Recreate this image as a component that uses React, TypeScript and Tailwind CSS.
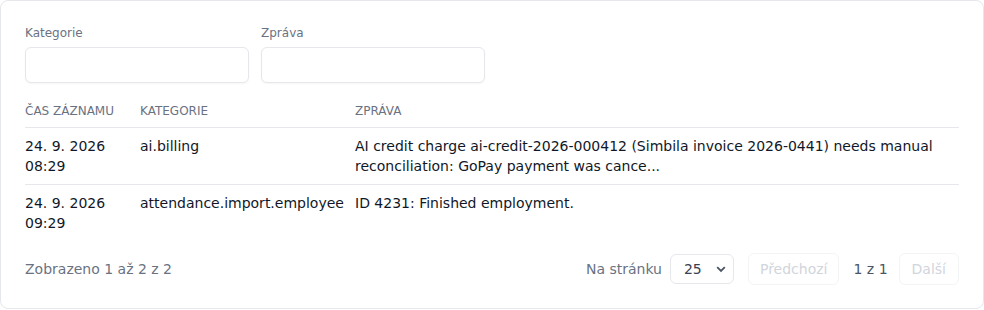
import React from "react";

const rows = [
  {
    time: ["24. 9. 2026", "08:29"],
    category: "ai.billing",
    message:
      "AI credit charge ai-credit-2026-000412 (Simbila invoice 2026-0441) needs manual reconciliation: GoPay payment was cance...",
  },
  {
    time: ["24. 9. 2026", "09:29"],
    category: "attendance.import.employee",
    message: "ID 4231: Finished employment.",
  },
];

const Filter = ({ label }: { label: string }) => (
  <div className="flex w-[224px] flex-col">
    <label className="mb-1.5 text-xs leading-4 text-gray-500">{label}</label>
    <input
      type="text"
      className="h-9 w-full rounded-md border border-gray-200 bg-white px-3 text-sm text-gray-900 shadow-[0_1px_2px_rgba(0,0,0,0.04)] outline-none"
    />
  </div>
);

export default function App() {
  return (
    <div className="bg-white p-0 font-['DejaVu_Sans',sans-serif]">
      <div className="h-[309px] rounded-lg border border-gray-200 bg-white px-6 pt-6">
        <div className="flex gap-3">
          <Filter label="Kategorie" />
          <Filter label="Zpráva" />
        </div>

        <table className="mt-3 w-full table-fixed border-collapse text-left">
          <thead>
            <tr className="border-b border-gray-200">
              <th className="w-[115px] py-2 pr-3 text-xs font-normal leading-4 text-gray-500">
                ČAS ZÁZNAMU
              </th>
              <th className="w-[215px] py-2 pr-[11px] text-xs font-normal leading-4 text-gray-500">
                KATEGORIE
              </th>
              <th className="py-2 text-xs font-normal leading-4 text-gray-500">ZPRÁVA</th>
            </tr>
          </thead>
          <tbody>
            {rows.map((row, idx) => (
              <tr
                key={idx}
                className={idx < rows.length - 1 ? "border-b border-gray-200" : ""}
              >
                <td className="py-2 pr-3 align-top text-sm leading-5 text-gray-900">
                  {row.time[0]}
                  <br />
                  {row.time[1]}
                </td>
                <td className="whitespace-nowrap py-2 pr-[11px] align-top text-sm leading-5 text-gray-900">
                  {row.category}
                </td>
                <td className="py-2 align-top text-sm leading-5 text-gray-900">
                  {row.message}
                </td>
              </tr>
            ))}
          </tbody>
        </table>

        <div className="mt-3 flex items-center justify-between">
          <span className="text-sm text-gray-500">Zobrazeno 1 až 2 z 2</span>
          <div className="flex items-center">
            <span className="mr-2 text-sm text-gray-500">Na stránku</span>
            <div className="relative">
              <select className="h-[30px] w-[64px] appearance-none rounded-md border border-gray-200 bg-white pl-[13px] text-sm text-gray-700 outline-none">
                <option>25</option>
              </select>
              <svg
                className="pointer-events-none absolute right-[8px] top-[12px]"
                width="10"
                height="7"
                viewBox="0 0 10 7"
                fill="none"
              >
                <path d="M1.2 1.2l3.8 3.8 3.8-3.8" stroke="#4b5563" strokeWidth="1.8" />
              </svg>
            </div>
            <button
              disabled
              className="ml-[14px] h-8 rounded-md border border-gray-100 px-[11px] text-sm text-gray-300"
            >
              Předchozí
            </button>
            <span className="ml-[14px] mr-[11px] text-sm text-gray-600">1 z 1</span>
            <button
              disabled
              className="h-8 rounded-md border border-gray-100 px-3 text-sm text-gray-300"
            >
              Další
            </button>
          </div>
        </div>
      </div>
    </div>
  );
}
